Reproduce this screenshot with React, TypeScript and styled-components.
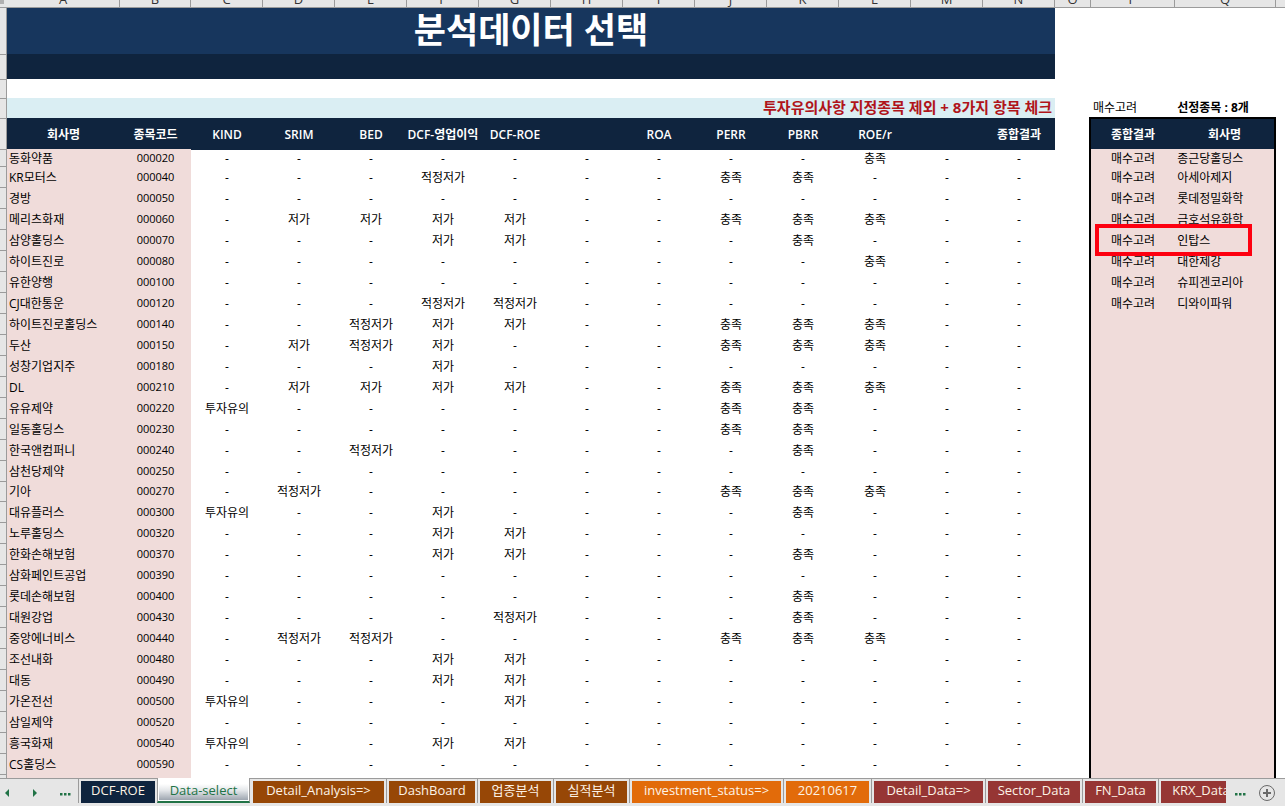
import React from "react";
import styled, { createGlobalStyle, css } from "styled-components";

const color = {
  title: "#17365d",
  navy: "#0f243e",
  pink: "#f0dcda",
  aqua: "#daeef3",
  red: "#b0141a",
  chrome: "#e6e6e6",
  line: "#9b9b9b",
  green: "#217346",
  brown: "#974706",
  orange: "#e26b0a",
  wine: "#963634",
};

const GlobalStyle = createGlobalStyle`
  *, *::before, *::after { box-sizing: border-box; }
  body {
    margin: 0;
    background: #fff;
    color: #000;
    font-family: "Open Sans", "Noto Sans CJK KR", sans-serif;
    font-size: 12px;
    line-height: 16px;
  }
  button { font: inherit; border: 0; padding: 0; cursor: pointer; }
  table { border-collapse: collapse; table-layout: fixed; width: 100%; }
  th, td { padding: 0; white-space: nowrap; }
`;

const Workbook = styled.div`
  display: flex;
  flex-direction: column;
  height: 100vh;
  overflow: hidden;
`;

const ColumnLetters = styled.div`
  display: grid;
  grid-template-columns: 7px 113fr 71fr repeat(12, 72fr) 36fr 84fr 101fr 9fr;
  flex: none;
  height: 8px;
  background: ${color.chrome};
  border-bottom: 1px solid ${color.line};
`;

const Letter = styled.div`
  display: flex;
  align-items: flex-end;
  justify-content: center;
  min-width: 0;
  overflow: hidden;
  border-right: 1px solid ${color.line};
  font-size: 13px;
  color: #333;
`;

const Corner = styled.div`
  height: 4px;
  margin-right: 3px;
  background: #b0b0b0;
`;

const Sheet = styled.main`
  display: grid;
  grid-template-columns: 7px minmax(0, 1048fr) minmax(0, 34fr) minmax(0, 187fr) minmax(0, 9fr);
  grid-template-rows: minmax(0, 1fr);
  flex: 1;
  min-height: 0;
  overflow: hidden;
`;

const Gutter = styled.div`
  background: ${color.chrome};
  border-right: 1px solid ${color.line};
  overflow: hidden;
`;

const GutterCell = styled.div<{ $height: number }>`
  height: ${(p) => p.$height}px;
  & + & {
    border-top: 1px solid ${color.line};
  }
`;

const Area = styled.section`
  display: flex;
  flex-direction: column;
  min-width: 0;
`;

const Title = styled.h1`
  flex: none;
  margin: 0;
  height: 46px;
  background: ${color.title};
  color: #fff;
  font-size: 35px;
  font-weight: 700;
  line-height: 44px;
  text-align: center;
`;

const TitleBase = styled.div`
  flex: none;
  height: 25px;
  margin-bottom: 19px;
  background: ${color.navy};
`;

const Note = styled.p`
  flex: none;
  margin: 0;
  padding-right: 3px;
  height: 20px;
  background: ${color.aqua};
  color: ${color.red};
  font-size: 15px;
  font-weight: 700;
  line-height: 18px;
  text-align: right;
  white-space: nowrap;
`;

const HeadCell = styled.th<{ $width?: string }>`
  width: ${(p) => p.$width};
  height: 31px;
  padding-top: 2px;
  background: ${color.navy};
  color: #fff;
  font-weight: 600;
  text-align: center;
`;

const Row = styled.tr<{ $height: number }>`
  position: relative;
  height: ${(p) => p.$height}px;
`;

const NameCell = styled.td`
  padding: 2px 0 0 2px;
  background: ${color.pink};
  line-height: 14px;
`;

const CodeCell = styled.td`
  background: ${color.pink};
  font-size: 11px;
  text-align: center;
`;

const ValueCell = styled.td<{ $first?: boolean }>`
  padding-top: 2px;
  line-height: 14px;
  text-align: center;
  ${(p) =>
    p.$first &&
    css`
      box-shadow: inset 0 1px ${color.navy};
    `}
`;

const SideCaption = styled.div`
  display: grid;
  grid-template-columns: 86fr 101fr;
  flex: none;
  height: 19px;
  margin-top: 90px;
  padding-left: 4px;
  line-height: 20px;
  white-space: nowrap;
`;

const SideCount = styled.strong`
  font-weight: 700;
`;

const SidePanel = styled.div`
  flex: 1;
  border: 2px solid #000;
  border-bottom: 0;
  background: ${color.pink};
`;

const SideHeadCell = styled(HeadCell)`
  height: 30px;
`;

const Marker = styled.span`
  position: absolute;
  z-index: 1;
  inset: -5px 22px -6px 4px;
  border: 4px solid #fe0010;
`;

const TabBar = styled.nav`
  display: flex;
  flex: none;
  height: 28px;
  background: ${color.chrome};
  border-top: 1px solid ${color.line};
`;

const TabNav = styled.div`
  display: flex;
  align-items: center;
  gap: 22px;
  flex: none;
  width: 78px;
  padding-left: 4px;
`;

const ArrowButton = styled.button`
  display: flex;
  width: 6px;
  background: none;
  color: ${color.green};
`;

const MoreButton = styled.button`
  display: flex;
  flex: none;
  width: 11px;
  padding-top: 4px;
  background: none;
  color: ${color.green};
`;

const Tabs = styled.div`
  display: flex;
  flex: 1;
  min-width: 0;
  overflow: hidden;
  margin-top: -1px;
`;

const TabSlot = styled.div<{ $bare?: boolean }>`
  display: flex;
  flex: none;
  padding: 2px 2px 0;
  border-top: 1px solid ${color.line};
  border-left: 1px solid ${(p) => (p.$bare ? "transparent" : color.line)};
  height: 25px;
`;

const Tab = styled.button<{ $width: number; $fill: string }>`
  width: ${(p) => p.$width}px;
  height: 22px;
  padding-bottom: 4px;
  background: ${(p) => p.$fill};
  color: #fdf3e6;
  font-size: 13px;
  line-height: 18px;
  white-space: nowrap;
`;

const ActiveSlot = styled.div`
  flex: none;
  height: 25px;
  padding: 3px 1px 0;
  background: #fff;
  border: 1px solid ${color.line};
  border-top: 0;
  border-bottom: 2px solid ${color.green};
`;

const ActiveTab = styled.button`
  display: block;
  width: 89px;
  height: 19px;
  background: linear-gradient(#fff 15%, #e3e6e9 50%, #9ea6b0);
  color: ${color.green};
  font-size: 13px;
  line-height: 19px;
`;

const TabEnd = styled.div`
  display: flex;
  align-items: center;
  justify-content: space-between;
  flex: none;
  width: 59px;
  padding: 0 9px;
`;

const AddButton = styled.button`
  display: flex;
  background: none;
  color: #6a6a6a;
`;

const letters = "ABCDEFGHIJKLMNOPQ".split("");

const columns = [
  "KIND", "SRIM", "BED", "DCF-영업이익", "DCF-ROE", "",
  "ROA", "PERR", "PBRR", "ROE/r", "", "종합결과",
];

const verdicts: Record<string, string> = {
  "-": "-",
  A: "적정저가",
  L: "저가",
  M: "충족",
  W: "투자유의",
};

const stocks: [string, string, string][] = [
  ["동화약품", "000020", "---------M--"],
  ["KR모터스", "000040", "---A---MM---"],
  ["경방", "000050", "------------"],
  ["메리츠화재", "000060", "-LLLL--MMM--"],
  ["삼양홀딩스", "000070", "---LL---M---"],
  ["하이트진로", "000080", "---------M--"],
  ["유한양행", "000100", "------------"],
  ["CJ대한통운", "000120", "---AA-------"],
  ["하이트진로홀딩스", "000140", "--ALL--MMM--"],
  ["두산", "000150", "-LAL---MMM--"],
  ["성창기업지주", "000180", "---L--------"],
  ["DL", "000210", "-LLLL--MMM--"],
  ["유유제약", "000220", "W------MM---"],
  ["일동홀딩스", "000230", "-------MM---"],
  ["한국앤컴퍼니", "000240", "--A-----M---"],
  ["삼천당제약", "000250", "------------"],
  ["기아", "000270", "-A-----MMM--"],
  ["대유플러스", "000300", "W--L----M---"],
  ["노루홀딩스", "000320", "---LL-------"],
  ["한화손해보험", "000370", "---LL---M---"],
  ["삼화페인트공업", "000390", "------------"],
  ["롯데손해보험", "000400", "--------M---"],
  ["대원강업", "000430", "----A---M---"],
  ["중앙에너비스", "000440", "-AA----MMM--"],
  ["조선내화", "000480", "---LL-------"],
  ["대동", "000490", "---LL-------"],
  ["가온전선", "000500", "W---L-------"],
  ["삼일제약", "000520", "------------"],
  ["흥국화재", "000540", "W--LL-------"],
  ["CS홀딩스", "000590", "------------"],
];

const picks = [
  "종근당홀딩스", "아세아제지", "롯데정밀화학", "금호석유화학",
  "인탑스", "대한제강", "슈피겐코리아", "디와이파워",
];
const markedPick = "인탑스";

const rowHeight = (index: number) => (index === 0 ? 17 : index === 16 ? 20 : 21);
const gutterRows = [46, 25, 19, 20, 31, ...stocks.map((_, i) => rowHeight(i)), 21];

const tabsAfter = [
  { label: "Detail_Analysis=>", width: 131, fill: color.brown, bare: true },
  { label: "DashBoard", width: 86, fill: color.brown },
  { label: "업종분석", width: 71, fill: color.brown },
  { label: "실적분석", width: 71, fill: color.brown },
  { label: "investment_status=>", width: 149, fill: color.orange },
  { label: "20210617", width: 83, fill: color.orange },
  { label: "Detail_Data=>", width: 109, fill: color.wine },
  { label: "Sector_Data", width: 92, fill: color.wine },
  { label: "FN_Data", width: 71, fill: color.wine },
  { label: "KRX_Data", width: 80, fill: color.wine },
];

const Dots = () => (
  <svg width="11" height="3" viewBox="0 0 11 3" fill="currentColor" aria-hidden="true">
    <rect x="0" y="0" width="2.5" height="2.5" />
    <rect x="4" y="0" width="2.5" height="2.5" />
    <rect x="8" y="0" width="2.5" height="2.5" />
  </svg>
);

export default function App() {
  return (
    <Workbook>
      <GlobalStyle />
      <ColumnLetters>
        <Corner />
        {letters.map((l) => (
          <Letter key={l}>{l}</Letter>
        ))}
      </ColumnLetters>

      <Sheet>
        <Gutter>
          {gutterRows.map((h, i) => (
            <GutterCell key={i} $height={h} />
          ))}
        </Gutter>

        <Area>
          <Title>분석데이터 선택</Title>
          <TitleBase />
          <Note>투자유의사항 지정종목 제외 + 8가지 항목 체크</Note>
          <table>
            <thead>
              <tr>
                <HeadCell $width="10.783%">회사명</HeadCell>
                <HeadCell $width="6.775%">종목코드</HeadCell>
                {columns.map((c, i) => (
                  <HeadCell key={i}>{c}</HeadCell>
                ))}
              </tr>
            </thead>
            <tbody>
              {stocks.map(([name, code, marks], i) => (
                <Row key={code} $height={rowHeight(i)}>
                  <NameCell>{name}</NameCell>
                  <CodeCell>{code}</CodeCell>
                  {marks.split("").map((m, j) => (
                    <ValueCell key={j} $first={i === 0}>
                      {verdicts[m]}
                    </ValueCell>
                  ))}
                </Row>
              ))}
              <Row $height={21}>
                <NameCell />
                <CodeCell />
                <ValueCell colSpan={12} />
              </Row>
            </tbody>
          </table>
        </Area>

        <div />

        <Area>
          <SideCaption>
            <span>매수고려</span>
            <SideCount>선정종목 : 8개</SideCount>
          </SideCaption>
          <SidePanel>
            <table>
              <thead>
                <tr>
                  <SideHeadCell $width="46%">종합결과</SideHeadCell>
                  <SideHeadCell>회사명</SideHeadCell>
                </tr>
              </thead>
              <tbody>
                {picks.map((name, i) => (
                  <Row key={name} $height={rowHeight(i)}>
                    <ValueCell>
                      매수고려
                      {name === markedPick && <Marker />}
                    </ValueCell>
                    <NameCell>{name}</NameCell>
                  </Row>
                ))}
              </tbody>
            </table>
          </SidePanel>
        </Area>
      </Sheet>

      <TabBar>
        <TabNav>
          <ArrowButton aria-label="Previous sheet">
            <svg width="6" height="8" viewBox="0 0 6 8" fill="currentColor">
              <path d="M5 0v8L1 4z" />
            </svg>
          </ArrowButton>
          <ArrowButton aria-label="Next sheet">
            <svg width="6" height="8" viewBox="0 0 6 8" fill="currentColor">
              <path d="M1 0v8l4-4z" />
            </svg>
          </ArrowButton>
          <MoreButton aria-label="Earlier sheets">
            <Dots />
          </MoreButton>
        </TabNav>
        <Tabs>
          <TabSlot>
            <Tab $width={74} $fill={color.navy}>DCF-ROE</Tab>
          </TabSlot>
          <ActiveSlot>
            <ActiveTab aria-current="page">Data-select</ActiveTab>
          </ActiveSlot>
          {tabsAfter.map((t) => (
            <TabSlot key={t.label} $bare={t.bare}>
              <Tab $width={t.width} $fill={t.fill}>{t.label}</Tab>
            </TabSlot>
          ))}
        </Tabs>
        <TabEnd>
          <MoreButton aria-label="Later sheets">
            <Dots />
          </MoreButton>
          <AddButton aria-label="New sheet">
            <svg width="18" height="18" viewBox="0 0 18 18" fill="none" stroke="currentColor">
              <circle cx="9" cy="9" r="7.5" />
              <path d="M9 5v8M5 9h8" strokeWidth="2" />
            </svg>
          </AddButton>
        </TabEnd>
      </TabBar>
    </Workbook>
  );
}
